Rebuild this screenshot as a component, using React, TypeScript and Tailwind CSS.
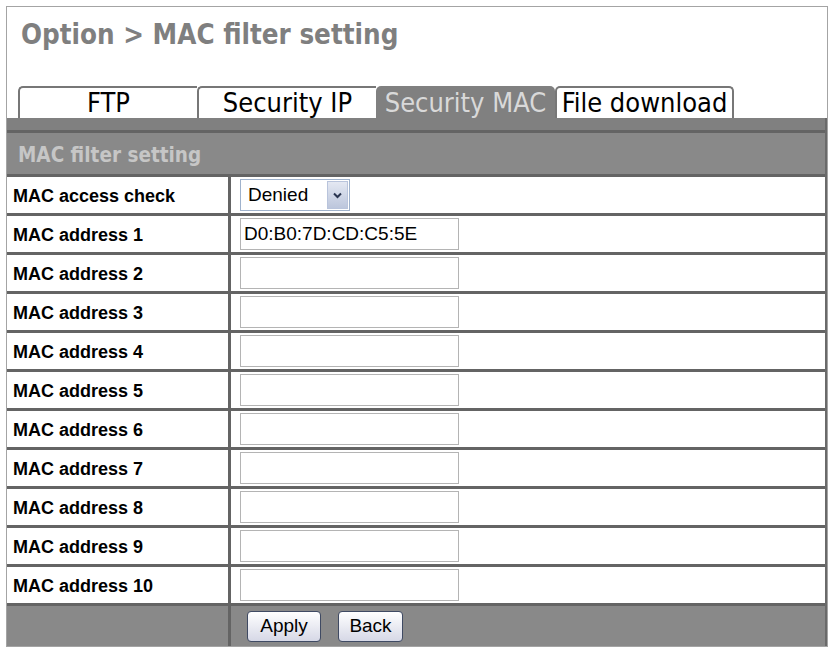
import React from "react";

const tabs = [
  { label: "FTP", active: false },
  { label: "Security IP", active: false },
  { label: "Security MAC", active: true },
  { label: "File download", active: false },
];

const addresses = ["D0:B0:7D:CD:C5:5E", "", "", "", "", "", "", "", "", ""];

const Chevron = () => (
  <svg width="9" height="7" viewBox="0 0 9 7">
    <path d="M1 1.5 L4.5 5 L8 1.5" fill="none" stroke="#2a3550" strokeWidth="2" />
  </svg>
);

const Row = ({ label, children }: { label: string; children: React.ReactNode }) => (
  <div className="grid h-[36px] grid-cols-[221px_1fr] gap-x-[3px]">
    <div className="flex items-center bg-white pl-[6px] pt-[2px] font-['Liberation_Sans',Arial,sans-serif] text-[18px] font-bold text-black">
      {label}
    </div>
    <div className="flex items-center bg-white pl-[9px]">{children}</div>
  </div>
);

export default function App() {
  return (
    <div className="min-h-[651px] w-[829px] bg-white pt-[6px] pl-[6px]">
      <div className="w-[822px] border border-[#a4a4a4]">
        <div className="h-[79px] pl-[14px] pt-[11px]">
          <h1 className="font-['DejaVu_Sans_Condensed','DejaVu_Sans',Verdana,sans-serif] text-[27.5px] font-bold leading-[32px] text-[#7f7f7f]">
            Option &gt; MAC filter setting
          </h1>
        </div>

        <div className="flex h-[32px] pl-[11px]">
          {tabs.map((t, i) => (
            <div
              key={t.label}
              className={
                t.active
                  ? "flex w-[179px] justify-center rounded-t-[5px] bg-[#808080] pt-[2px] font-['DejaVu_Sans_Condensed','DejaVu_Sans',Verdana,sans-serif] text-[27px] leading-[30px] text-[#d9d9d9]"
                  : i === tabs.length - 1
                    ? "flex w-[179px] justify-center rounded-t-[5px] border-x-2 border-t-2 border-[#777] bg-white font-['DejaVu_Sans_Condensed','DejaVu_Sans',Verdana,sans-serif] text-[27px] leading-[30px] text-black"
                    : "flex w-[179px] justify-center rounded-tl-[5px] border-l-2 border-t-2 border-[#777] bg-white font-['DejaVu_Sans_Condensed','DejaVu_Sans',Verdana,sans-serif] text-[27px] leading-[30px] text-black"
              }
            >
              {t.label}
            </div>
          ))}
        </div>

        <div className="flex flex-col gap-[3px] border-r-2 border-[#6a6a6a] bg-[#646464]">
          <div className="h-[12px] bg-[#808080]" />
          <div className="flex h-[41px] items-center bg-[#898989] pl-[11px] pt-[3px] font-['DejaVu_Sans_Condensed','DejaVu_Sans',Verdana,sans-serif] text-[20.5px] font-bold text-[#c6c6c6]">
            MAC filter setting
          </div>

          <Row label="MAC access check">
            <div className="flex h-[32px] w-[110px] items-center justify-between border border-[#9fb2cc] bg-white pl-[7px] pr-[1px]">
              <span className="font-['Liberation_Sans',Arial,sans-serif] text-[19px] text-black">Denied</span>
              <span className="flex h-[28px] w-[21px] items-center justify-center border border-[#b9c4dc] bg-gradient-to-b from-[#e4e8f2] to-[#bcc6dc]">
                <Chevron />
              </span>
            </div>
          </Row>

          {addresses.map((a, i) => (
            <Row key={i} label={`MAC address ${i + 1}`}>
              <div className="flex h-[32px] w-[219px] items-center border border-[#b4b4b4] bg-white pl-[3px] font-['Liberation_Sans',Arial,sans-serif] text-[19px] text-black">
                {a}
              </div>
            </Row>
          ))}

          <div className="grid h-[40px] grid-cols-[221px_1fr] gap-x-[3px]">
            <div className="bg-[#898989]" />
            <div className="flex items-center gap-[17px] bg-[#898989] pl-[16px] pt-[1px]">
              <button className="h-[31px] w-[74px] rounded-[4px] border border-[#3f4a63] bg-gradient-to-b from-[#ffffff] to-[#d6d8e6] font-['Liberation_Sans',Arial,sans-serif] text-[19px] text-black">
                Apply
              </button>
              <button className="h-[31px] w-[65px] rounded-[4px] border border-[#3f4a63] bg-gradient-to-b from-[#ffffff] to-[#d6d8e6] font-['Liberation_Sans',Arial,sans-serif] text-[19px] text-black">
                Back
              </button>
            </div>
          </div>
        </div>
      </div>
    </div>
  );
}
